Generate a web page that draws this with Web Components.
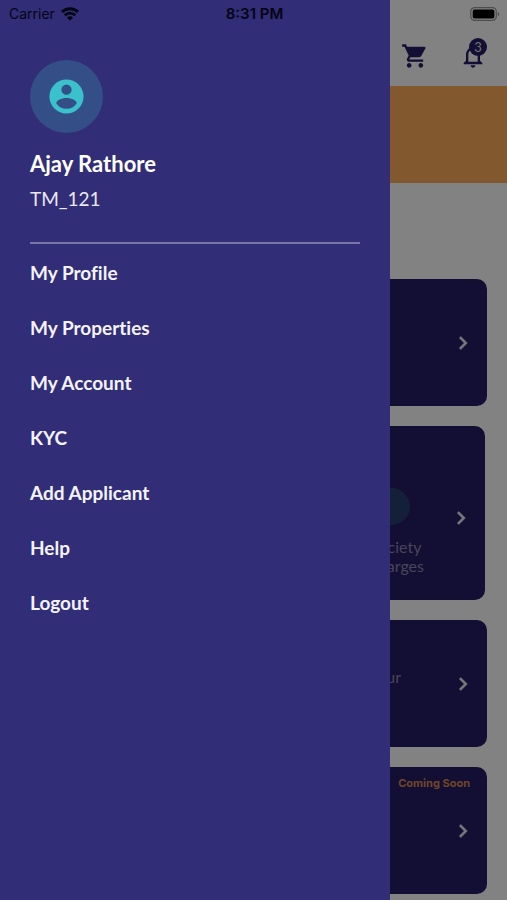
<!DOCTYPE html>
<html lang="en">
<head>
<meta charset="utf-8">
<meta name="viewport" content="width=device-width, initial-scale=1">
<title>Account menu</title>
<style>
  body { margin: 0; font-family: Lato, "Open Sans", sans-serif; background: #fff; }
</style>
</head>
<body>
<app-shell>
  <status-bar slot="status"></status-bar>
  <home-page slot="page"></home-page>
  <side-drawer slot="drawer" name="Ajay Rathore" code="TM_121">
    <drawer-link>My Profile</drawer-link>
    <drawer-link>My Properties</drawer-link>
    <drawer-link>My Account</drawer-link>
    <drawer-link>KYC</drawer-link>
    <drawer-link>Add Applicant</drawer-link>
    <drawer-link>Help</drawer-link>
    <drawer-link>Logout</drawer-link>
  </side-drawer>
</app-shell>
<script>
  function define(name, markup, setup) {
    customElements.define(name, class extends HTMLElement {
      constructor() {
        super();
        this.attachShadow({ mode: "open" }).innerHTML = markup;
      }
      connectedCallback() { if (setup) setup(this, this.shadowRoot); }
    });
  }

  define("app-shell", `
    <style>
      :host { display: block; position: relative; min-height: 100vh; overflow: hidden; }
      .scrim { position: absolute; inset: 0; background: rgba(0, 0, 0, .49); }
      .drawer { position: absolute; inset: 0 auto 0 0; width: 77%; display: grid; }
      .status { position: absolute; inset: 0 0 auto 0; }
    </style>
    <slot name="page"></slot>
    <div class="scrim"></div>
    <div class="drawer"><slot name="drawer"></slot></div>
    <div class="status"><slot name="status"></slot></div>
  `);

  define("status-bar", `
    <style>
      :host { display: grid; grid-template-columns: 1fr auto 1fr; align-items: center; height: 28px;
        padding: 0 7px 0 9px; color: #050414; font: 400 14px/28px Inter, sans-serif; }
      .carrier { display: flex; align-items: center; gap: 6px; }
      .time { font-weight: 600; font-size: 15px; }
      .battery { justify-self: end; }
      svg { display: block; }
    </style>
    <span class="carrier"><span>Carrier</span>
      <svg width="18" height="14" viewBox="0 0 18 14" fill="none" stroke="currentColor" stroke-width="2.8">
        <path d="M1 5a11.500 11.500 0 0 1 16 0M3.800 8.300a7.300 7.300 0 0 1 10.400 0"/>
        <path d="M9 13.600 6 10.700a4.400 4.400 0 0 1 6 0Z" fill="currentColor" stroke="none"/>
      </svg>
    </span>
    <span class="time">8:31 PM</span>
    <svg class="battery" width="30" height="15" viewBox="0 0 30 15">
      <rect x=".8" y=".6" width="25.500" height="12.800" rx="4" fill="none" stroke="#4d4d4d" stroke-width="1.200"/>
      <rect x="2.700" y="2.600" width="21.700" height="8.800" rx="2" fill="#000"/>
      <path d="M27.800 4.900c2 .8 2 3.400 0 4.200Z" fill="#4d4d4d"/>
    </svg>
  `);

  define("home-page", `
    <style>
      :host { display: block; padding-bottom: 6px; }
      header { box-sizing: border-box; height: 86px; padding: 26px 20px 0 0; display: flex;
        justify-content: flex-end; align-items: center; gap: 30px; }
      button { position: relative; display: block; border: 0; padding: 0; background: none; color: #271c64; }
      svg { display: block; }
      .count { position: absolute; top: -4px; right: 0; width: 18px; height: 18px; border-radius: 50%;
        background: #271c64; color: #ddd; font: 400 13px/18px Lato, sans-serif; text-align: center; }
      .banner { height: 97px; background: #ffad5c; }
      main { display: grid; gap: 20px; padding: 96px 20px 0; }
    </style>
    <header>
      <button aria-label="Cart"><svg width="28" height="28" viewBox="0 0 24 24" fill="currentColor"><path d="M7 18c-1.100 0-1.990.9-1.990 2S5.900 22 7 22s2-.9 2-2-.9-2-2-2zM1 2v2h2l3.600 7.590-1.350 2.450c-.16.28-.25.61-.25.96 0 1.100.9 2 2 2h12v-2H7.420c-.14 0-.25-.11-.25-.25l.03-.12.9-1.630h7.450c.75 0 1.410-.41 1.750-1.030l3.580-6.490A1 1 0 0 0 20 4H5.210l-.94-2H1zm16 16c-1.100 0-1.990.9-1.990 2s.89 2 1.990 2 2-.9 2-2-.9-2-2-2z"/></svg></button>
      <button aria-label="Notifications"><svg width="28" height="28" viewBox="0 0 24 24" fill="currentColor"><path d="M12 22c1.100 0 2-.9 2-2h-4c0 1.100.9 2 2 2zm6-6v-5c0-3.070-1.630-5.640-4.500-6.320V4a1.500 1.500 0 0 0-3 0v.68C7.640 5.360 6 7.920 6 11v5l-2 2v1h16v-1l-2-2zm-2 1H8v-6c0-2.480 1.510-4.500 4-4.500s4 2.020 4 4.500v6z"/></svg><span class="count">3</span></button>
    </header>
    <div class="banner"></div>
    <main>
      <info-card></info-card>
      <info-card size="tall"><charge-tile>Society<br>Charges</charge-tile></info-card>
      <info-card><card-note>your</card-note></info-card>
      <info-card badge="Coming Soon"></info-card>
    </main>
  `);

  define("info-card", `
    <style>
      :host { position: relative; box-sizing: border-box; display: flex; align-items: center;
        justify-content: flex-end; min-height: 127px; padding: 0 11px 0 20px; border-radius: 10px;
        background: #271c64; color: #8d87ad; }
      :host([size="tall"]) { min-height: 174px; margin-right: 2px; padding-top: 10px; }
      button { display: block; border: 0; padding: 0; background: none; color: #fff; }
      svg { display: block; }
      .badge { position: absolute; top: 8px; right: 17px; color: #d98a50; font: 700 11px/16px Inter, sans-serif; }
      .badge:empty { display: none; }
    </style>
    <slot></slot>
    <button aria-label="Open"><svg width="26" height="26" viewBox="0 0 24 24" fill="#eeedf5" stroke="#eeedf5" stroke-width=".5"><path d="M10 6 8.590 7.410 13.170 12l-4.580 4.590L10 18l6-6z"/></svg></button>
    <span class="badge"></span>
  `, (host, root) => { root.querySelector(".badge").textContent = host.getAttribute("badge") || ""; });

  define("charge-tile", `
    <style>
      :host { display: grid; justify-items: center; gap: 12px; padding: 26px 24px 0 0;
        font: 400 16px/19px Lato, sans-serif; text-align: center; }
      .dot { width: 37px; height: 37px; margin-right: 8px; border-radius: 50%; background: #283f71; }
    </style>
    <span class="dot"></span><span><slot></slot></span>
  `);

  define("card-note", `
    <style>
      :host { display: block; padding: 0 49px 14px 0; font: 400 16px/20px Lato, sans-serif; }
    </style>
    <slot></slot>
  `);

  define("side-drawer", `
    <style>
      :host { display: block; padding: 60px 30px 20px; background: #322d77; color: #fff; }
      .avatar { display: grid; place-items: center; width: 73px; height: 73px; border-radius: 50%; background: #344e88; }
      h1 { margin: 17px 0 0; font-size: 22px; line-height: 28px; font-weight: 700; }
      p { margin: 8px 0 0; font-size: 19px; line-height: 26px; color: #e9e8f5; }
      hr { margin: 30px 0 1px; border: 0; height: 2px; background: #7975a9; }
      nav { display: grid; }
    </style>
    <div class="avatar"><svg width="41" height="41" viewBox="0 0 24 24" fill="#3bc1cb"><path fill-rule="evenodd" d="M12 2a10 10 0 1 0 0 20 10 10 0 0 0 0-20zm0 3a3 3 0 1 1 0 6 3 3 0 0 1 0-6zm0 14.200a7.200 7.200 0 0 1-6-3.220c.03-1.990 4-3.080 6-3.080s5.970 1.090 6 3.080a7.200 7.200 0 0 1-6 3.220z"/></svg></div>
    <h1></h1>
    <p></p>
    <hr>
    <nav><slot></slot></nav>
  `, (host, root) => {
    root.querySelector("h1").textContent = host.getAttribute("name");
    root.querySelector("p").textContent = host.getAttribute("code");
  });

  define("drawer-link", `
    <style>
      :host { display: block; }
      a { display: block; color: #f4f3fc; font: 700 19px/55px Lato, sans-serif;
        font-variant-ligatures: none; text-decoration: none; }
    </style>
    <a href="#"><slot></slot></a>
  `);
</script>
</body>
</html>
